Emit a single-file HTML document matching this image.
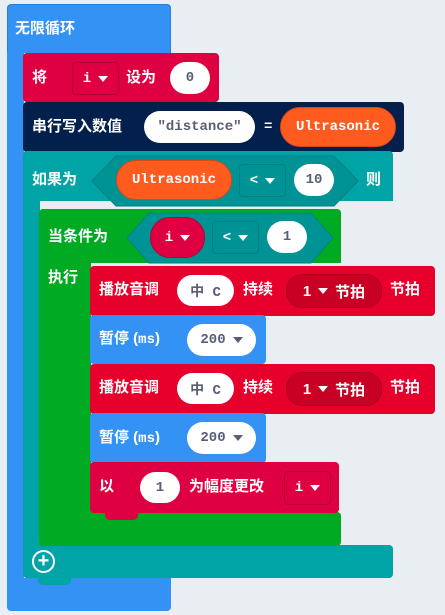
<!DOCTYPE html>
<html><head><meta charset="utf-8"><style>
body{margin:0;width:445px;height:615px;background:#e9eef2;position:relative;overflow:hidden;font-family:"Liberation Sans","Noto Sans CJK SC",sans-serif;}
div{position:absolute;box-sizing:border-box}
.t{color:#fff;font-weight:bold;font-size:15px;line-height:20px;white-space:nowrap}
.m{font-family:"Liberation Mono","Noto Sans CJK SC",monospace;font-weight:bold;font-size:14px}
.pill{background:#fff;border-radius:16px;color:#575e75;text-align:center;font-family:"Liberation Mono","Noto Sans CJK SC",monospace;font-weight:bold;font-size:14px;display:flex;align-items:center;justify-content:center}
.dd{border-radius:4px;color:#fff;font-family:"Liberation Mono",monospace;font-weight:bold;font-size:14px;display:flex;align-items:center;justify-content:center}
.tab{height:8px;width:33px;border-radius:0 0 5px 5px}
.tri{display:inline-block;width:0;height:0;border-left:5px solid transparent;border-right:5px solid transparent;border-top:6px solid currentColor;margin-left:7px;vertical-align:middle}
</style></head><body>
<!-- forever -->
<div style="left:7px;top:4px;width:164px;height:49px;background:#3592f5;border-radius:4px 4px 0 0;border:1px solid #2a7ed8;border-bottom:none"></div>
<div style="left:7px;top:52px;width:17px;height:530px;background:#3592f5"></div>
<div style="left:7px;top:578px;width:164px;height:33px;background:#3592f5;border-radius:0 0 4px 4px"></div>
<div class="t" style="left:15px;top:19px">无限循环</div>
<!-- set i -->
<div style="left:23px;top:53px;width:196px;height:49px;background:#de0040;border-radius:4px"></div>
<div class="tab" style="left:38px;top:101px;background:#de0040"></div>
<div class="t" style="left:32px;top:68px">将</div>
<div class="dd" style="left:72px;top:62px;width:47px;height:33px;border:1px solid #b50035">i<span class="tri"></span></div>
<div class="t" style="left:126px;top:68px">设为</div>
<div class="pill" style="left:170px;top:62px;width:40px;height:32px">0</div>
<!-- serial -->
<div style="left:23px;top:102px;width:381px;height:50px;background:#03204d;border-radius:4px"></div>
<div class="tab" style="left:38px;top:151px;background:#03204d"></div>
<div class="t" style="left:32px;top:117px">串行写入数值</div>
<div class="pill" style="left:144px;top:111px;width:111px;height:32px">"distance"</div>
<div class="t m" style="left:264px;top:117px">=</div>
<div class="pill" style="left:280px;top:107px;width:116px;height:40px;background:#ff5b1e;color:#fff;border:1px solid #d64a16;border-radius:20px">Ultrasonic</div>
<!-- if -->
<div style="left:23px;top:151px;width:370px;height:50px;background:#00a4a6;border-radius:4px 4px 0 0"></div>
<div style="left:23px;top:200px;width:17px;height:350px;background:#00a4a6"></div>
<div style="left:23px;top:545px;width:370px;height:33px;background:#00a4a6;border-radius:0 4px 4px 4px"></div>
<div class="tab" style="left:38px;top:577px;background:#00a4a6"></div>
<div class="t" style="left:32px;top:170px">如果为</div>
<svg style="position:absolute;left:90px;top:155px" width="270" height="52"><polygon points="2,26 26,1 244,1 268,26 244,51 26,51" fill="#009396" stroke="#008082"/></svg>
<div class="pill" style="left:116px;top:160px;width:116px;height:40px;background:#ff5b1e;color:#fff;border:1px solid #d64a16;border-radius:20px">Ultrasonic</div>
<div class="dd" style="left:239px;top:164px;width:47px;height:33px;border:1px solid #008082">&lt;<span class="tri"></span></div>
<div class="pill" style="left:294px;top:164px;width:40px;height:32px">10</div>
<div class="t" style="left:366px;top:170px">则</div>
<div style="left:32px;top:550px;width:23px;height:23px;border:2px solid #fff;border-radius:50%;color:#fff;font-weight:bold;font-size:20px;line-height:18px;text-align:center">+</div>
<!-- while -->
<div style="left:39px;top:209px;width:302px;height:54px;background:#00aa22;border-radius:4px 4px 0 0"></div>
<div style="left:39px;top:262px;width:52px;height:255px;background:#00aa22"></div>
<div style="left:39px;top:512px;width:302px;height:34px;background:#00aa22;border-radius:0 4px 4px 4px"></div>
<div class="t" style="left:48px;top:227px">当条件为</div>
<svg style="position:absolute;left:125px;top:212px" width="210" height="52"><polygon points="2,26 24,1 186,1 208,26 186,51 24,51" fill="#009396" stroke="#008082"/></svg>
<div class="pill" style="left:150px;top:217px;width:55px;height:41px;background:#de0040;color:#fff;border:1px solid #b50035;border-radius:20px">i<span class="tri"></span></div>
<div class="dd" style="left:212px;top:221px;width:47px;height:33px;border:1px solid #008082">&lt;<span class="tri"></span></div>
<div class="pill" style="left:267px;top:221px;width:40px;height:32px">1</div>
<div class="t" style="left:48px;top:268px">执行</div>
<!-- play 1 -->
<div style="left:90px;top:266px;width:345px;height:50px;background:#e8002c;border-radius:4px"></div>
<div class="t" style="left:99px;top:280px">播放音调</div>
<div class="pill" style="left:177px;top:275px;width:57px;height:31px">中 C</div>
<div class="t" style="left:243px;top:280px">持续</div>
<div class="pill" style="left:286px;top:274px;width:96px;height:34px;background:#c70024;color:#fff;border:1px solid #b00020;font-family:'Liberation Sans','Noto Sans CJK SC',sans-serif;font-size:15px">1<span class="tri" style="margin-right:7px"></span>节拍</div>
<div class="t" style="left:390px;top:280px">节拍</div>
<!-- pause 1 -->
<div style="left:90px;top:315px;width:176px;height:49px;background:#3592f5;border-radius:4px"></div>
<div class="tab" style="left:105px;top:363px;background:#3592f5"></div>
<div class="t" style="left:99px;top:329px">暂停 (<span class="m">ms</span>)</div>
<div class="pill" style="left:187px;top:324px;width:69px;height:32px">200<span class="tri"></span></div>
<!-- play 2 -->
<div style="left:90px;top:364px;width:345px;height:50px;background:#e8002c;border-radius:4px"></div>
<div class="t" style="left:99px;top:378px">播放音调</div>
<div class="pill" style="left:177px;top:373px;width:57px;height:31px">中 C</div>
<div class="t" style="left:243px;top:378px">持续</div>
<div class="pill" style="left:286px;top:372px;width:96px;height:34px;background:#c70024;color:#fff;border:1px solid #b00020;font-family:'Liberation Sans','Noto Sans CJK SC',sans-serif;font-size:15px">1<span class="tri" style="margin-right:7px"></span>节拍</div>
<div class="t" style="left:390px;top:378px">节拍</div>
<!-- pause 2 -->
<div style="left:90px;top:413px;width:176px;height:50px;background:#3592f5;border-radius:4px"></div>
<div class="t" style="left:99px;top:428px">暂停 (<span class="m">ms</span>)</div>
<div class="pill" style="left:187px;top:422px;width:69px;height:32px">200<span class="tri"></span></div>
<!-- change -->
<div style="left:90px;top:462px;width:249px;height:51px;background:#de0040;border-radius:4px"></div>
<div class="tab" style="left:105px;top:512px;background:#de0040"></div>
<div class="t" style="left:99px;top:477px">以</div>
<div class="pill" style="left:140px;top:472px;width:40px;height:31px">1</div>
<div class="t" style="left:189px;top:477px">为幅度更改</div>
<div class="dd" style="left:284px;top:471px;width:47px;height:34px;border:1px solid #b50035">i<span class="tri"></span></div>
</body></html>
